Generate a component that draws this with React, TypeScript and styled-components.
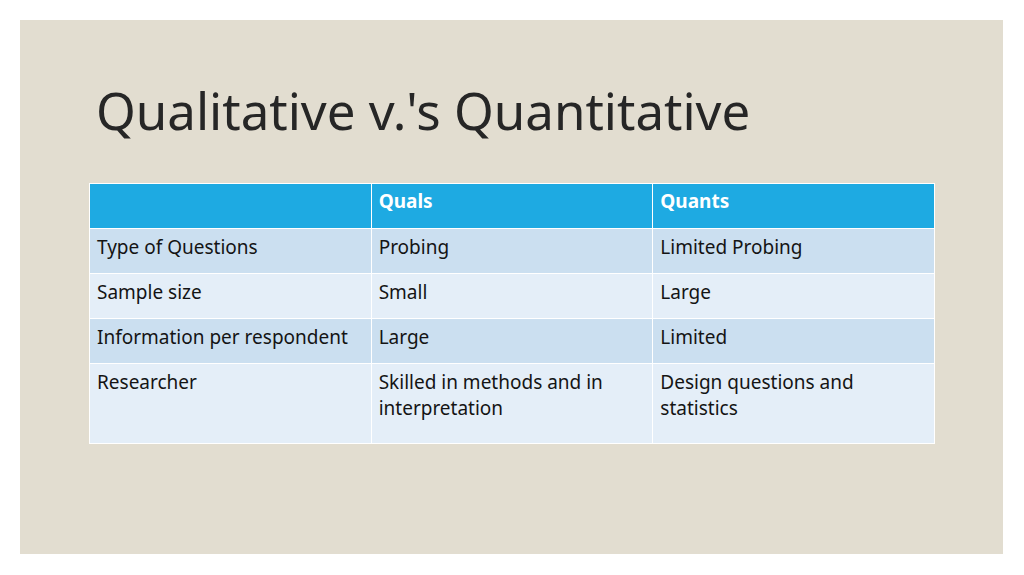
import React from "react";
import styled, { createGlobalStyle } from "styled-components";

const Global = createGlobalStyle`
  html, body { margin: 0; padding: 0; background: #ffffff; }
  body { font-family: "Noto Sans", "Open Sans", sans-serif; }
`;

const Page = styled.div`
  width: 1024px;
  height: 575px;
  padding: 20px 21px 21px 20px;
  box-sizing: border-box;
`;

const Slide = styled.div`
  width: 983px;
  height: 534px;
  background: #e2ddd0;
  padding: 57px 69px 0 69px;
  box-sizing: border-box;
  display: flex;
  flex-direction: column;
`;

const Title = styled.h1`
  margin: 0 0 0 7px;
  font-family: "Noto Sans", "Open Sans", sans-serif;
  font-weight: 400;
  font-size: 51px;
  line-height: 66px;
  color: #262626;
`;

const Table = styled.div`
  margin-top: 40px;
  width: 846px;
  display: grid;
  grid-template-columns: 1fr 1fr 1fr;
  gap: 1px;
  background: #ffffff;
  border: 1px solid #ffffff;
  box-sizing: border-box;
`;

const Cell = styled.div<{ $tone: "head" | "dark" | "light"; $tall?: boolean }>`
  background: ${(p) =>
    p.$tone === "head" ? "#1eaae2" : p.$tone === "dark" ? "#cbdff0" : "#e4eef8"};
  color: ${(p) => (p.$tone === "head" ? "#ffffff" : "#141414")};
  font-weight: ${(p) => (p.$tone === "head" ? 700 : 400)};
  font-size: 19px;
  line-height: 26px;
  padding: ${(p) => (p.$tone === "head" ? 4 : 5)}px 8px 0 7px;
  height: ${(p) => (p.$tall ? 79 : 44)}px;
  box-sizing: border-box;
`;

const rows: [string, string, string][] = [
  ["Type of Questions", "Probing", "Limited Probing"],
  ["Sample size", "Small", "Large"],
  ["Information per respondent", "Large", "Limited"],
  ["Researcher", "Skilled in methods and in interpretation", "Design questions and statistics"],
];

export default function App() {
  return (
    <>
      <Global />
      <Page>
        <Slide>
          <Title>Qualitative v.'s Quantitative</Title>
          <Table>
            <Cell $tone="head" />
            <Cell $tone="head">Quals</Cell>
            <Cell $tone="head">Quants</Cell>
            {rows.map((r, i) =>
              r.map((c, j) => (
                <Cell key={`${i}-${j}`} $tone={i % 2 === 0 ? "dark" : "light"} $tall={i === 3}>
                  {c}
                </Cell>
              ))
            )}
          </Table>
        </Slide>
      </Page>
    </>
  );
}
